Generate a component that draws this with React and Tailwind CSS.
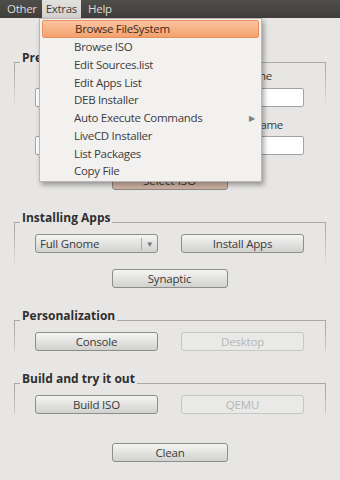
import React from "react";

const BG = "bg-[#e7e6e5]";

function Btn({ children, disabled, className = "" }) {
  return (
    <div
      className={`flex h-[19px] items-center justify-center rounded-[3px] border text-[11.5px] leading-none tracking-[-0.2px] ${
        disabled
          ? "border-[#c6c6c5] bg-[#e9e9e8] text-[#b5b5b4]"
          : "border-[#8d8d8c] bg-gradient-to-b from-[#f5f5f4] to-[#d1d1d0] text-[#3a3a3a]"
      } ${className}`}
    >
      {children}
    </div>
  );
}

function Frame({ title, className = "", children }) {
  return (
    <div
      className={`relative mx-[14px] border-x border-t border-b-0 [border-image:linear-gradient(to_bottom,#a8a8a7,#a8a8a7_6px,transparent_46px)_1] ${className}`}
    >
      <span
        className={`absolute -top-[13px] left-[5px] ${BG} px-[2px] text-[12px] font-bold leading-[16px] text-[#2e2e2e]`}
      >
        {title}
      </span>
      {children}
    </div>
  );
}

function Input() {
  return <div className="h-[19px] rounded-[2px] border border-[#a3a3a2] bg-white" />;
}

const menuItems = [
  "Browse FileSystem",
  "Browse ISO",
  "Edit Sources.list",
  "Edit Apps List",
  "DEB Installer",
  "Auto Execute Commands",
  "LiveCD Installer",
  "List Packages",
  "Copy File",
];

export default function App() {
  return (
    <div
      className={`relative flex h-[480px] w-[340px] flex-col overflow-hidden ${BG} font-['Open_Sans',sans-serif] text-[#3a3a3a]`}
    >
      {/* menubar */}
      <div className="flex h-[18px] items-stretch bg-gradient-to-b from-[#4f4e4b] to-[#3f3e3b] text-[11.5px] tracking-[-0.3px] text-[#dedcd6]">
        <span className="flex items-center pl-[7px] pr-[5px]">Other</span>
        <span className="flex items-center bg-gradient-to-b from-[#e2e1de] to-[#d2d1ce] px-[4px] text-[#3c3c3c]">
          Extras
        </span>
        <span className="flex items-center pl-[7px]">Help</span>
      </div>

      {/* Preferences */}
      <Frame title="Preferences" className="mt-[44px] pl-[20px] pr-[21px] pt-[6px]">
        <div className="grid grid-cols-[123px_123px] gap-x-[23px] text-[11.5px] tracking-[-0.3px]">
          <div className="flex flex-col">
            <span className="h-[14px] pl-[8px] leading-[14px]">ISO Path</span>
            <div className="mt-[5px]">
              <Input />
            </div>
            <span className="mt-[11px] h-[14px] pl-[8px] leading-[14px]">Version</span>
            <div className="mt-[4px]">
              <Input />
            </div>
          </div>
          <div className="flex flex-col">
            <span className="h-[14px] pr-[32px] text-right leading-[14px]">Distro Name</span>
            <div className="mt-[5px]">
              <Input />
            </div>
            <span className="mt-[11px] h-[14px] pr-[21px] text-right leading-[14px]">User Name</span>
            <div className="mt-[4px]">
              <Input />
            </div>
          </div>
        </div>
        <div className="mt-[16px] flex justify-center">
          <div className="flex h-[19px] w-[116px] items-center justify-center rounded-[3px] border border-[#8a8a89] bg-gradient-to-b from-[#ecdcd2] to-[#cfae9c] text-[11.5px] text-[#3a3a3a]">
            Select ISO
          </div>
        </div>
      </Frame>

      {/* Installing Apps */}
      <Frame title="Installing Apps" className="mt-[32px] pl-[20px] pr-[21px] pt-[11px]">
        <div className="grid grid-cols-[123px_123px] gap-x-[23px]">
          <div className="flex h-[19px] items-center rounded-[3px] border border-[#8d8d8c] bg-gradient-to-b from-[#f5f5f4] to-[#d1d1d0] text-[11.5px] tracking-[-0.2px] text-[#3a3a3a]">
            <span className="flex-1 pl-[4px]">Full Gnome</span>
            <span className="h-[12px] w-px bg-[#a9a9a8]" />
            <span className="w-[15px] text-center text-[8px] text-[#777]">▼</span>
          </div>
          <Btn>Install Apps</Btn>
        </div>
        <div className="mt-[16px] flex justify-center">
          <Btn className="w-[116px]">Synaptic</Btn>
        </div>
      </Frame>

      {/* Personalization */}
      <Frame title="Personalization" className="mt-[32px] pl-[20px] pr-[21px] pt-[11px]">
        <div className="grid grid-cols-[123px_123px] gap-x-[23px]">
          <Btn>Console</Btn>
          <Btn disabled>Desktop</Btn>
        </div>
      </Frame>

      {/* Build */}
      <Frame title="Build and try it out" className="mt-[32px] pl-[20px] pr-[21px] pt-[11px]">
        <div className="grid grid-cols-[123px_123px] gap-x-[23px]">
          <Btn>Build ISO</Btn>
          <Btn disabled>QEMU</Btn>
        </div>
      </Frame>

      <div className="mt-[29px] flex justify-center">
        <Btn className="w-[116px]">Clean</Btn>
      </div>

      {/* Extras dropdown */}
      <div className="absolute left-[39px] top-[18px] w-[223px] border border-[#b9b8b6] bg-[#f2f1f0] py-[1px] shadow-[2px_3px_5px_rgba(0,0,0,0.35)]">
        {menuItems.map((item, i) => (
          <div
            key={item}
            className={`relative mx-[2px] flex h-[17.75px] items-center pl-[32px] text-[11.5px] tracking-[-0.3px] ${
              i === 0
                ? "rounded-[2px] border border-[#e8915f] bg-gradient-to-b from-[#fbc49f] to-[#f3a16d] text-[#3a2a20]"
                : "text-[#3c3c3c]"
            }`}
          >
            {item}
            {item === "Auto Execute Commands" && (
              <span className="ml-auto pr-[4px] text-[8px] text-[#808080]">▶</span>
            )}
          </div>
        ))}
      </div>
    </div>
  );
}
